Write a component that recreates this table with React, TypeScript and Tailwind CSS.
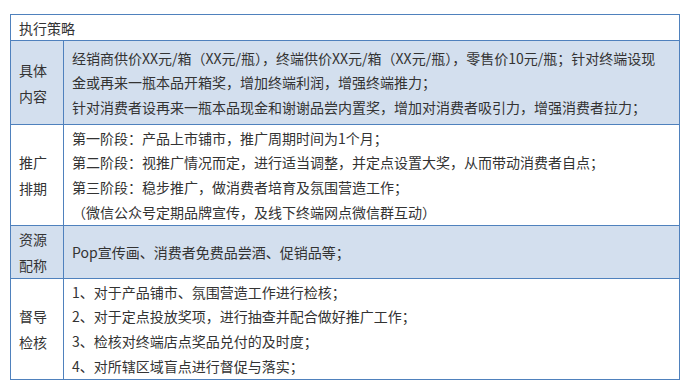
const FONT = '"Microsoft YaHei", "Noto Sans CJK SC", "Noto Sans", sans-serif';

const rows = [
  {
    label: ['具体', '内容'],
    bg: 'bg-[#d3dfee]',
    h: 'h-[84px]',
    lines: [
      '经销商供价XX元/箱（XX元/瓶），终端供价XX元/箱（XX元/瓶），零售价10元/瓶；针对终端设现',
      '金或再来一瓶本品开箱奖，增加终端利润，增强终端推力；',
      '针对消费者设再来一瓶本品现金和谢谢品尝内置奖，增加对消费者吸引力，增强消费者拉力；',
    ],
  },
  {
    label: ['推广', '排期'],
    bg: 'bg-white',
    h: 'h-[101px]',
    lines: [
      '第一阶段：产品上市铺市，推广周期时间为1个月；',
      '第二阶段：视推广情况而定，进行适当调整，并定点设置大奖，从而带动消费者自点；',
      '第三阶段：稳步推广，做消费者培育及氛围营造工作；',
      '（微信公众号定期品牌宣传，及线下终端网点微信群互动）',
    ],
  },
  {
    label: ['资源', '配称'],
    bg: 'bg-[#d3dfee]',
    h: 'h-[51px]',
    lines: ['Pop宣传画、消费者免费品尝酒、促销品等；'],
  },
  {
    label: ['督导', '检核'],
    bg: 'bg-white',
    h: 'h-[101px]',
    lines: [
      '1、对于产品铺市、氛围营造工作进行检核；',
      '2、对于定点投放奖项，进行抽查并配合做好推广工作；',
      '3、检核对终端店点奖品兑付的及时度；',
      '4、对所辖区域盲点进行督促与落实；',
    ],
  },
];

export default function App() {
  return (
    <div className="w-[689px] h-[389px] bg-white pt-[14px] pl-[10px] text-[#333] text-[14px]" style={{ fontFamily: FONT }}>
      <table className="w-[670px] border-collapse">
        <tbody>
          <tr className="h-[26px]">
            <td colSpan={2} className="border border-[#4f81bd] px-2 leading-[24px] align-middle">执行策略</td>
          </tr>
          {rows.map((r, i) => (
            <tr key={i} className={`${r.bg} ${r.h}`}>
              <td className="w-[53px] border border-[#4f81bd] pl-2 pr-1 align-middle leading-[26px]">
                {r.label.map((l) => (
                  <div key={l} className="whitespace-nowrap">{l}</div>
                ))}
              </td>
              <td className="border border-[#4f81bd] px-2 align-middle leading-[24.6px]">
                {r.lines.map((l, j) => (
                  <div key={j} className="whitespace-nowrap">{l}</div>
                ))}
              </td>
            </tr>
          ))}
        </tbody>
      </table>
    </div>
  );
}
